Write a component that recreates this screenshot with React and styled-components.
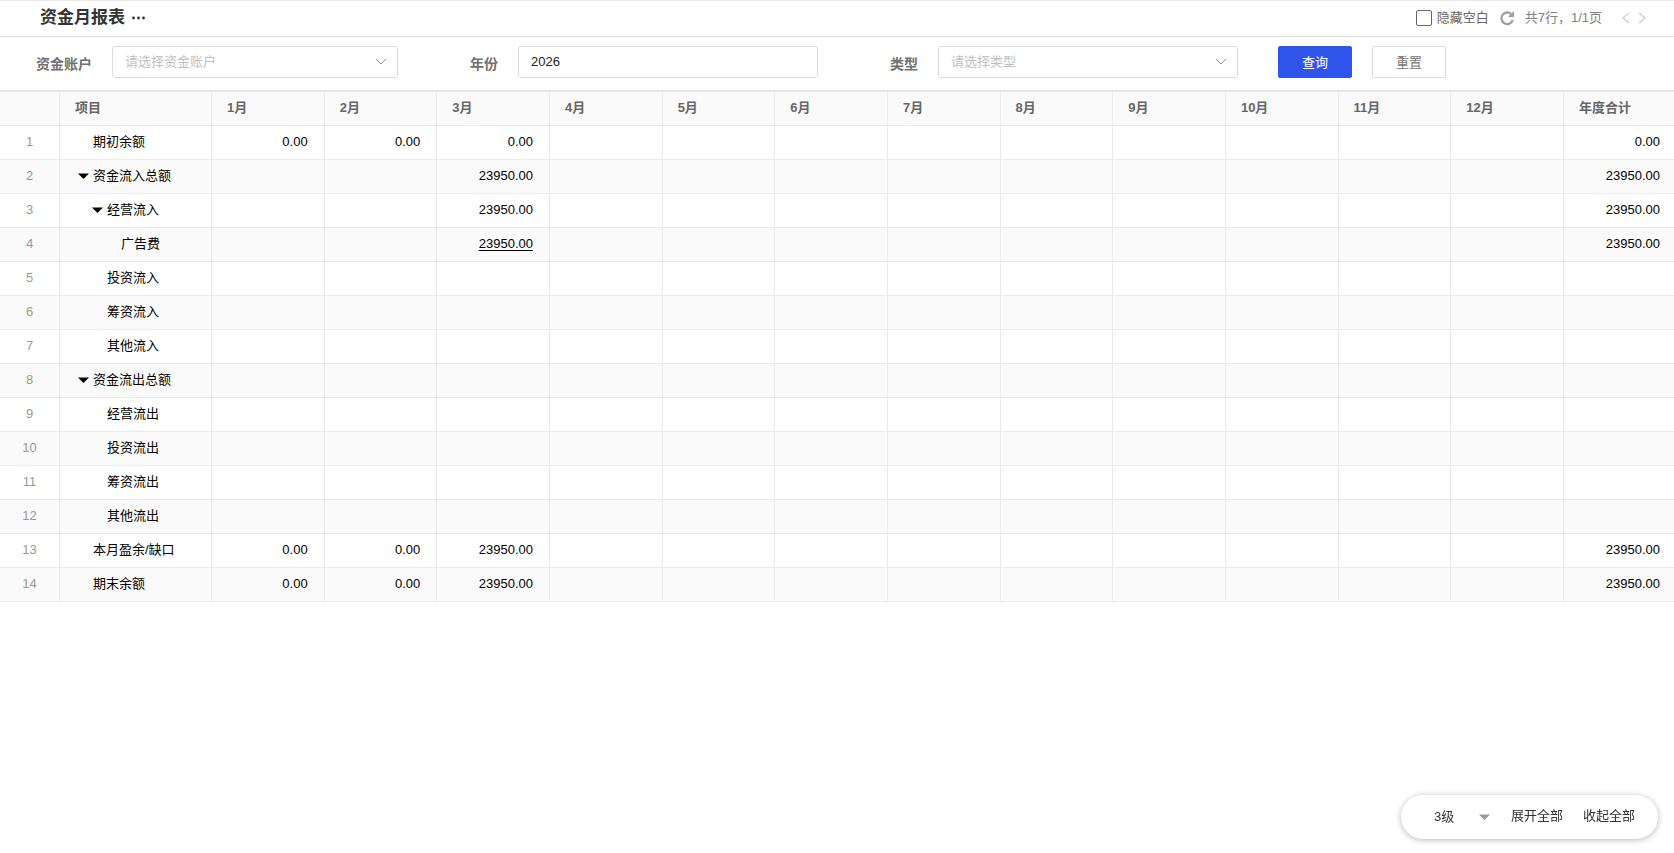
import React, { useState } from "react";
import styled, { createGlobalStyle } from "styled-components";

const GlobalStyle = createGlobalStyle`
  * {
    box-sizing: border-box;
  }

  body {
    margin: 0;
    background: #fff;
  }

  body, button, input, select {
    font-family: "Liberation Sans", "Noto Sans CJK SC", sans-serif;
    font-size: 13px;
  }

  button, select {
    cursor: pointer;
  }
`;

const Page = styled.div`
  min-height: 100vh;
  border-top: 1px solid #e8e8e8;
`;

const TitleBar = styled.header`
  display: flex;
  align-items: center;
  justify-content: space-between;
  height: 36px;
  padding: 0 28px 2px 40px;
  border-bottom: 1px solid #dcdcdc;
`;

const TitleGroup = styled.div`
  display: flex;
  align-items: center;
  gap: 6px;
`;

const Title = styled.h1`
  margin: 0;
  font-size: 17px;
  line-height: 24px;
  font-weight: 700;
  color: #333;
`;

const IconButton = styled.button`
  display: inline-flex;
  align-items: center;
  justify-content: center;
  padding: 0;
  border: none;
  background: none;
  color: ${({ $color }) => $color || "#333"};
`;

const Tools = styled.div`
  display: flex;
  align-items: center;
  line-height: 20px;
  color: #808080;
`;

const CheckLabel = styled.label`
  display: flex;
  align-items: center;
  gap: 5px;
  margin-right: 10px;
  color: #666;
`;

const Checkbox = styled.input`
  appearance: none;
  width: 16px;
  height: 16px;
  margin: 0;
  border: 1px solid #666;
  border-radius: 2px;
  background: #fff;

  &:checked {
    background: #2f54eb;
  }
`;

const PageInfo = styled.span`
  margin: 0 20px 0 10px;
`;

const Pager = styled.div`
  display: flex;
  gap: 8px;
`;

const Filters = styled.form`
  display: flex;
  align-items: center;
  height: 55px;
  padding-bottom: 4px;
  border-bottom: 2px solid #e6e6e6;
`;

const Field = styled.div`
  display: flex;
  align-items: center;
  justify-content: flex-end;
  flex: 0 1 ${({ $width }) => $width};
  gap: 20px;
`;

const FieldLabel = styled.label`
  flex: none;
  padding-top: 3px;
  font-size: 14px;
  font-weight: 700;
  color: #707070;
`;

const Control = styled.div`
  position: relative;
  flex: 0 1 ${({ $width }) => $width};
  color: #999;

  svg {
    position: absolute;
    top: 12px;
    right: 11px;
    pointer-events: none;
  }
`;

const Input = styled.input`
  display: block;
  width: 100%;
  height: 32px;
  padding: 0 12px;
  border: 1px solid #dcdcdc;
  border-radius: 3px;
  background: #fff;
  color: #222;
  outline: none;
`;

const Select = styled(Input).attrs({ as: "select" })`
  appearance: none;
  color: #bfbfbf;
`;

const Actions = styled.div`
  display: flex;
  gap: 20px;
  margin-left: 40px;
`;

const Button = styled.button`
  width: 74px;
  height: 32px;
  padding: 0;
  border: 1px solid ${({ $primary }) => ($primary ? "#2f54eb" : "#dcdcdc")};
  border-radius: 2px;
  background: ${({ $primary }) => ($primary ? "#2f54eb" : "#fff")};
  color: ${({ $primary }) => ($primary ? "#fff" : "#777")};
`;

const Table = styled.table`
  width: 100%;
  table-layout: fixed;
  border-collapse: separate;
  border-spacing: 0;
  color: #000;
`;

const Col = styled.col`
  width: ${({ $width }) => $width || "auto"};
`;

const Row = styled.tr`
  background: ${({ $striped }) => ($striped ? "#fafafa" : "#fff")};
`;

const Cell = styled.td`
  height: 34px;
  padding: 0 16px 2px 15px;
  border-right: 1px solid #ebebeb;
  border-bottom: 1px solid #ebebeb;
  line-height: 20px;
  text-align: right;
  white-space: nowrap;

  &:last-child {
    padding-right: 14px;
    border-right: none;
  }
`;

const HeadCell = styled(Cell).attrs({ as: "th", scope: "col" })`
  text-align: left;
  font-weight: 700;
  color: #666;
`;

const IndexCell = styled(Cell)`
  padding: 0 0 2px;
  text-align: center;
  color: #999;
`;

const ItemCell = styled(Cell)`
  padding: 0 0 2px ${({ $level }) => 18 + $level * 14}px;
`;

const Item = styled.div`
  display: flex;
  align-items: center;
`;

const ToggleSlot = styled.span`
  display: flex;
  flex: none;
  width: 15px;
`;

const AmountLink = styled.a`
  color: inherit;
  text-underline-offset: 2px;
`;

const LevelBar = styled.div`
  position: fixed;
  right: 16px;
  bottom: 14px;
  display: flex;
  align-items: center;
  gap: 20px;
  height: 44px;
  padding: 0 23px 2px 33px;
  border-radius: 22px;
  background: #fff;
  box-shadow: 0 1px 6px rgba(0, 0, 0, 0.28);
`;

const LevelControl = styled.div`
  position: relative;
  width: 57px;
  color: #999;

  svg {
    position: absolute;
    top: 8px;
    right: 1px;
    pointer-events: none;
  }
`;

const LevelSelect = styled.select`
  display: block;
  appearance: none;
  width: 100%;
  height: 20px;
  padding: 0;
  border: none;
  background: none;
  color: #333;
  outline: none;
`;

const TextButton = styled.button`
  padding: 0;
  border: none;
  background: none;
  line-height: 20px;
  color: #333;
`;

const months = Array.from({ length: 12 }, (_, i) => `${i + 1}月`);

const rows = [
  { name: "期初余额", level: 0, values: ["0.00", "0.00", "0.00"], total: "0.00" },
  { name: "资金流入总额", level: 0, parent: true, values: ["", "", "23950.00"], total: "23950.00" },
  { name: "经营流入", level: 1, parent: true, values: ["", "", "23950.00"], total: "23950.00" },
  { name: "广告费", level: 2, link: true, values: ["", "", "23950.00"], total: "23950.00" },
  { name: "投资流入", level: 1 },
  { name: "筹资流入", level: 1 },
  { name: "其他流入", level: 1 },
  { name: "资金流出总额", level: 0, parent: true },
  { name: "经营流出", level: 1 },
  { name: "投资流出", level: 1 },
  { name: "筹资流出", level: 1 },
  { name: "其他流出", level: 1 },
  { name: "本月盈余/缺口", level: 0, values: ["0.00", "0.00", "23950.00"], total: "23950.00" },
  { name: "期末余额", level: 0, values: ["0.00", "0.00", "23950.00"], total: "23950.00" },
];

function ChevronDown() {
  return (
    <svg width="12" height="8" viewBox="0 0 12 8" fill="none" stroke="currentColor">
      <path d="M1 1l5 5 5-5" />
    </svg>
  );
}

function Caret() {
  return (
    <svg width="11" height="6" viewBox="0 0 11 6" fill="currentColor">
      <path d="M0 0.5h11L5.5 6z" />
    </svg>
  );
}

function DotsIcon() {
  return (
    <svg width="14" height="4" viewBox="0 0 14 4" fill="currentColor">
      <circle cx="2.5" cy="2" r="1.4" />
      <circle cx="7.5" cy="2" r="1.4" />
      <circle cx="12.5" cy="2" r="1.4" />
    </svg>
  );
}

function RefreshIcon() {
  return (
    <svg width="16" height="16" viewBox="0 0 16 16" fill="none">
      <path d="M12.4 4.2A5.8 5.8 0 1 0 13.8 10" stroke="currentColor" strokeWidth="2.3" />
      <path d="M15 1v6H9z" fill="currentColor" />
    </svg>
  );
}

function PagerIcon({ d }) {
  return (
    <svg width="8" height="12" viewBox="0 0 8 12" fill="none" stroke="currentColor">
      <path d={d} strokeWidth="1.3" />
    </svg>
  );
}

function Toolbar() {
  const [hideEmpty, setHideEmpty] = useState(false);

  return (
    <TitleBar>
      <TitleGroup>
        <Title>资金月报表</Title>
        <IconButton aria-label="更多">
          <DotsIcon />
        </IconButton>
      </TitleGroup>
      <Tools>
        <CheckLabel>
          <Checkbox
            type="checkbox"
            checked={hideEmpty}
            onChange={(e) => setHideEmpty(e.target.checked)}
          />
          隐藏空白
        </CheckLabel>
        <IconButton $color="#a0a0a0" aria-label="刷新">
          <RefreshIcon />
        </IconButton>
        <PageInfo>共7行，1/1页</PageInfo>
        <Pager>
          <IconButton $color="#ccc" aria-label="上一页">
            <PagerIcon d="M7 1L1 6l6 5" />
          </IconButton>
          <IconButton $color="#ccc" aria-label="下一页">
            <PagerIcon d="M1 1l6 5-6 5" />
          </IconButton>
        </Pager>
      </Tools>
    </TitleBar>
  );
}

function FilterBar() {
  return (
    <Filters onSubmit={(e) => e.preventDefault()}>
      <Field $width="398px">
        <FieldLabel htmlFor="account">资金账户</FieldLabel>
        <Control $width="286px">
          <Select id="account">
            <option>请选择资金账户</option>
          </Select>
          <ChevronDown />
        </Control>
      </Field>
      <Field $width="420px">
        <FieldLabel htmlFor="year">年份</FieldLabel>
        <Control $width="300px">
          <Input id="year" type="text" defaultValue="2026" />
        </Control>
      </Field>
      <Field $width="420px">
        <FieldLabel htmlFor="type">类型</FieldLabel>
        <Control $width="300px">
          <Select id="type">
            <option>请选择类型</option>
          </Select>
          <ChevronDown />
        </Control>
      </Field>
      <Actions>
        <Button type="submit" $primary>查询</Button>
        <Button type="reset">重置</Button>
      </Actions>
    </Filters>
  );
}

function ReportRow({ row, index }) {
  const values = row.values || [];

  return (
    <Row $striped={index % 2 === 1}>
      <IndexCell>{index + 1}</IndexCell>
      <ItemCell $level={row.level}>
        <Item>
          <ToggleSlot>
            {row.parent && (
              <IconButton $color="#000" aria-label={`收起${row.name}`}>
                <Caret />
              </IconButton>
            )}
          </ToggleSlot>
          {row.name}
        </Item>
      </ItemCell>
      {months.map((month, i) => (
        <Cell key={month}>
          {row.link && values[i] ? <AmountLink href="#">{values[i]}</AmountLink> : values[i]}
        </Cell>
      ))}
      <Cell>{row.total}</Cell>
    </Row>
  );
}

function App() {
  return (
    <Page>
      <GlobalStyle />
      <Toolbar />
      <FilterBar />
      <Table>
        <colgroup>
          <Col $width="60px" />
          <Col $width="152px" />
          {months.map((month) => (
            <Col key={month} />
          ))}
          <Col $width="110px" />
        </colgroup>
        <thead>
          <Row $striped>
            <HeadCell />
            <HeadCell>项目</HeadCell>
            {months.map((month) => (
              <HeadCell key={month}>{month}</HeadCell>
            ))}
            <HeadCell>年度合计</HeadCell>
          </Row>
        </thead>
        <tbody>
          {rows.map((row, index) => (
            <ReportRow key={row.name} row={row} index={index} />
          ))}
        </tbody>
      </Table>
      <LevelBar>
        <LevelControl>
          <LevelSelect aria-label="层级" defaultValue="3级">
            <option>1级</option>
            <option>2级</option>
            <option>3级</option>
          </LevelSelect>
          <Caret />
        </LevelControl>
        <TextButton>展开全部</TextButton>
        <TextButton>收起全部</TextButton>
      </LevelBar>
    </Page>
  );
}

export default App;
